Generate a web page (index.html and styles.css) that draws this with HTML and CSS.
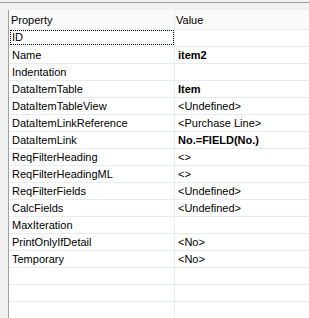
FILE: index.html
```html
<!DOCTYPE html>
<html>
<head>
<meta charset="utf-8">
<link rel="stylesheet" href="styles.css">
</head>
<body>
<div class="top-bar"></div>
<div class="prop-grid">
  <div class="prop-row prop-head">
    <div class="prop-name">Property</div>
    <div class="prop-value">Value</div>
  </div>
  <div class="prop-row">
    <div class="prop-name"><span class="focus">ID</span></div>
    <div class="prop-value"></div>
  </div>
  <div class="prop-row">
    <div class="prop-name">Name</div>
    <div class="prop-value bold">item2</div>
  </div>
  <div class="prop-row">
    <div class="prop-name">Indentation</div>
    <div class="prop-value"></div>
  </div>
  <div class="prop-row">
    <div class="prop-name">DataItemTable</div>
    <div class="prop-value bold">Item</div>
  </div>
  <div class="prop-row">
    <div class="prop-name">DataItemTableView</div>
    <div class="prop-value">&lt;Undefined&gt;</div>
  </div>
  <div class="prop-row">
    <div class="prop-name">DataItemLinkReference</div>
    <div class="prop-value">&lt;Purchase Line&gt;</div>
  </div>
  <div class="prop-row">
    <div class="prop-name">DataItemLink</div>
    <div class="prop-value bold">No.=FIELD(No.)</div>
  </div>
  <div class="prop-row">
    <div class="prop-name">ReqFilterHeading</div>
    <div class="prop-value">&lt;&gt;</div>
  </div>
  <div class="prop-row">
    <div class="prop-name">ReqFilterHeadingML</div>
    <div class="prop-value">&lt;&gt;</div>
  </div>
  <div class="prop-row">
    <div class="prop-name">ReqFilterFields</div>
    <div class="prop-value">&lt;Undefined&gt;</div>
  </div>
  <div class="prop-row">
    <div class="prop-name">CalcFields</div>
    <div class="prop-value">&lt;Undefined&gt;</div>
  </div>
  <div class="prop-row">
    <div class="prop-name">MaxIteration</div>
    <div class="prop-value"></div>
  </div>
  <div class="prop-row">
    <div class="prop-name">PrintOnlyIfDetail</div>
    <div class="prop-value">&lt;No&gt;</div>
  </div>
  <div class="prop-row">
    <div class="prop-name">Temporary</div>
    <div class="prop-value">&lt;No&gt;</div>
  </div>
  <div class="prop-row">
    <div class="prop-name"></div>
    <div class="prop-value"></div>
  </div>
  <div class="prop-row">
    <div class="prop-name"></div>
    <div class="prop-value"></div>
  </div>
  <div class="prop-row">
    <div class="prop-name"></div>
    <div class="prop-value"></div>
  </div>
</div>
</body>
</html>
```

FILE: styles.css
```css
body {
  margin: 0;
  background-color: #f0f0f0;
  font-family: "Liberation Sans", Arial, sans-serif;
  font-size: 11px;
  color: #000;
  overflow: hidden;
}

.top-bar {
  height: 2px;
  border-bottom: 1px solid #a0a0a0;
  margin-bottom: 7px;
}

.prop-grid {
  margin-left: 8px;
  border-left: 1px solid #a0a0a0;
  background-color: #fff;
}

.prop-row {
  display: flex;
  height: 16px;
  border-bottom: 1px solid #e6ecf2;
  line-height: 16px;
}

.prop-name {
  width: 162px;
  padding-left: 3px;
  border-right: 1px solid #e6ecf2;
  white-space: nowrap;
}

.prop-value {
  flex: 1;
  padding-left: 3px;
  white-space: nowrap;
}

.prop-head {
  height: 19px;
  line-height: 20px;
  background-color: #fafafa;
}
.prop-head .prop-name {
  padding-left: 2px;
  width: 163px;
}
.prop-head .prop-value {
  padding-left: 1px;
}

.focus {
  display: block;
  margin: 1px 1px 1px -1px;
  height: 13px;
  line-height: 13px;
  padding-left: 1px;
  outline: 1px dotted #000;
}

.bold {
  font-weight: bold;
}
```
